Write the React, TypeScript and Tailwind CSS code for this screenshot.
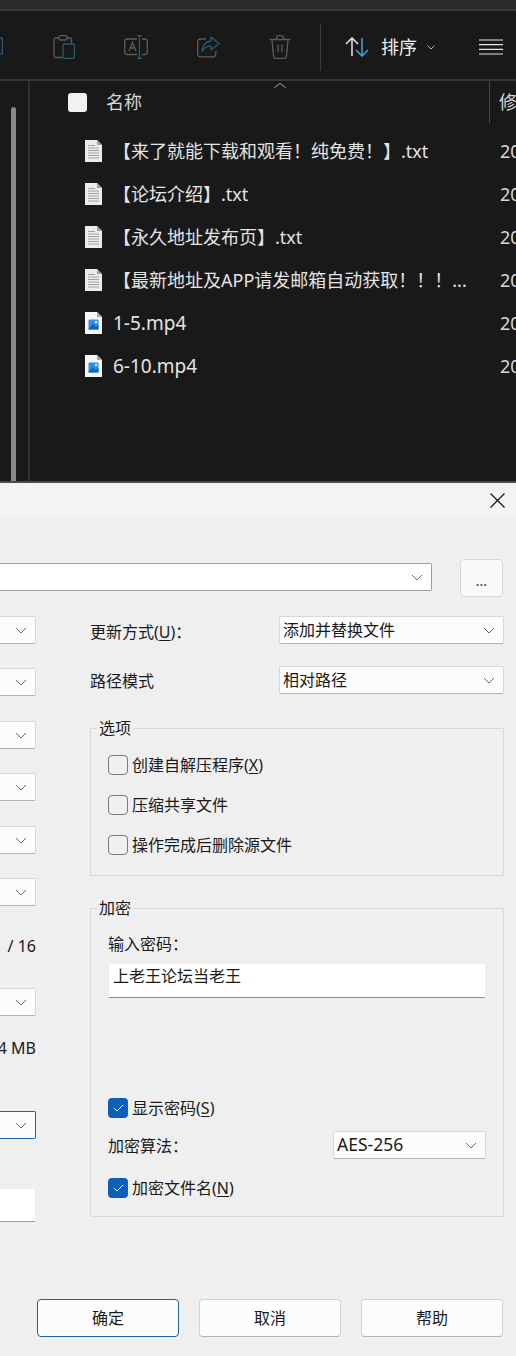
const FONT = "font-['Noto_Sans','Noto_Sans_CJK_SC',sans-serif]";

const FILES = [
  { name: "【来了就能下载和观看！纯免费！】.txt", video: false },
  { name: "【论坛介绍】.txt", video: false },
  { name: "【永久地址发布页】.txt", video: false },
  { name: "【最新地址及APP请发邮箱自动获取！！！...", video: false },
  { name: "1-5.mp4", video: true },
  { name: "6-10.mp4", video: true },
];

function TextFileIcon() {
  return (
    <svg width="17" height="22" viewBox="0 0 17 22" className="shrink-0">
      <path d="M0 0H12L17 5V22H0Z" fill="#ececec" />
      <path d="M12 0L17 5H12Z" fill="#a0a0a0" />
      <path d="M3 5.500H10M3 8H14M3 10.500H14M3 13H14M3 15.500H14M3 18H14" stroke="#a2a2a2" strokeWidth="1" />
    </svg>
  );
}

function VideoFileIcon() {
  return (
    <svg width="17" height="22" viewBox="0 0 17 22" className="shrink-0">
      <path d="M0 0H12L17 5V22H0Z" fill="#f6f6f6" />
      <path d="M12 0L17 5H12Z" fill="#a8a8a8" />
      <rect x="3.500" y="7.500" width="10" height="10" rx="1" fill="#2f8fe8" />
      <path d="M3.500 16.500L8 12L11 15L13.500 13V17.500H3.500Z" fill="#1462c0" />
      <circle cx="11" cy="10" r="1.200" fill="#dff0ff" />
    </svg>
  );
}

function Toolbar() {
  return (
    <div className="flex h-[68px] items-center bg-[#191919] pt-[4px]">
      <svg width="3" height="20" viewBox="0 0 3 20" fill="none" className="shrink-0">
        <path d="M0 1H0.500Q2.500 1 2.500 3V15Q2.500 17 0.500 17H0" stroke="#2b5570" strokeWidth="1.500" />
      </svg>
      <svg width="22" height="24" viewBox="0 0 22 24" fill="none" className="ml-[50px] shrink-0">
        <path d="M6 3H2.500A1.500 1.500 0 0 0 1 4.500V21A1.500 1.500 0 0 0 2.500 22.500H9M14 3H17A1.500 1.500 0 0 1 18.500 4.500V8" stroke="#5c5c5c" strokeWidth="1.300" />
        <rect x="6" y="0.700" width="8" height="4.300" rx="1.500" stroke="#5c5c5c" strokeWidth="1.300" />
        <rect x="10" y="9" width="11.300" height="14.300" rx="1.500" stroke="#2b5a78" strokeWidth="1.300" />
      </svg>
      <svg width="24" height="24" viewBox="0 0 24 24" fill="none" className="ml-[49px] shrink-0">
        <path d="M13 4H3A2.500 2.500 0 0 0 0.700 6.500V17A2.500 2.500 0 0 0 3 19.500H13M18 4H21A2.500 2.500 0 0 1 23.300 6.500V17A2.500 2.500 0 0 1 21 19.500H18" stroke="#5c5c5c" strokeWidth="1.300" />
        <path d="M5 16L8.500 7.500L12 16M6.200 13H10.800" stroke="#5c5c5c" strokeWidth="1.300" />
        <path d="M15.500 0.700V23.300M13 0.700H18M13 23.300H18" stroke="#2b5a78" strokeWidth="1.300" />
      </svg>
      <svg width="23" height="22" viewBox="0 0 23 22" fill="none" className="ml-[49px] shrink-0">
        <path d="M9 3H3.500A2.800 2.800 0 0 0 0.700 5.800V18A2.800 2.800 0 0 0 3.500 20.800H16A2.800 2.800 0 0 0 18.800 18V15" stroke="#5c5c5c" strokeWidth="1.300" />
        <path d="M14 1L22 7.500L14 14V10.200C10 10 7 11.500 5 15.500C5.500 9.500 9 5.500 14 5Z" stroke="#2b5a78" strokeWidth="1.300" strokeLinejoin="round" />
      </svg>
      <svg width="22" height="24" viewBox="0 0 22 24" fill="none" className="ml-[49px] shrink-0">
        <path d="M0.500 4.500H21.500M7.500 4.500V2.500A1.800 1.800 0 0 1 9.300 0.700H12.700A1.800 1.800 0 0 1 14.500 2.500V4.500M3 4.500L4.500 21A2.500 2.500 0 0 0 7 23.300H15A2.500 2.500 0 0 0 17.500 21L19 4.500M9 9.500V17.500M13 9.500V17.500" stroke="#5c5c5c" strokeWidth="1.300" />
      </svg>
      <div className="ml-[29px] h-[47px] w-[1px] shrink-0 bg-[#3a3a3a]" />
      <svg width="24" height="20" viewBox="0 0 24 20" fill="none" className="ml-[24px] shrink-0">
        <path d="M7 19V1M1 7L7 1L13 7" stroke="#e8e8e8" strokeWidth="1.500" />
        <path d="M17 1V19M11 13L17 19L23 13" stroke="#4aa3dc" strokeWidth="1.500" />
      </svg>
      <span className="ml-[12px] shrink-0 text-[18px] leading-none text-[#eeeeee]">排序</span>
      <svg width="8" height="5" viewBox="0 0 8 5" fill="none" className="ml-[10px] shrink-0">
        <path d="M0.500 0.500L4 4L7.500 0.500" stroke="#b0b0b0" strokeWidth="1" />
      </svg>
      <svg width="24" height="16" viewBox="0 0 24 16" fill="none" className="ml-[44px] shrink-0">
        <path d="M0 1H24M0 5.700H24M0 10.300H24M0 15H24" stroke="#e8e8e8" strokeWidth="1.200" />
      </svg>
    </div>
  );
}

function FileList() {
  return (
    <div className="relative flex min-h-0 flex-1 bg-[#191919]">
      <div className="w-[28px] shrink-0 pl-[11px] pt-[26px]">
        <div className="h-full w-[5px] rounded-t-[3px] bg-[#8a8a8a]" />
      </div>
      <div className="w-[2px] shrink-0 bg-[#303030]" />
      <div className="min-w-0 flex-1">
        <div className="flex h-[42px] items-center">
          <div className="flex h-full w-[460px] shrink-0 items-center border-r border-[#4a4a4a] pl-[38px]">
            <div className="h-[19px] w-[19px] rounded-[3px] bg-[#f2f2f2]" />
            <span className="ml-[19px] text-[18px] leading-none text-[#d8d8d8]">名称</span>
          </div>
          <span className="ml-[9px] whitespace-nowrap text-[18px] leading-none text-[#d8d8d8]">修</span>
        </div>
        <svg width="12" height="5" viewBox="0 0 12 5" fill="none" className="absolute left-[274px] top-[2px]">
          <path d="M0.500 4.500L6 0.500L11.500 4.500" stroke="#a8a8a8" strokeWidth="1" />
        </svg>
        <div className="pt-[6px]">
          {FILES.map((file) => (
            <div key={file.name} className="flex h-[43px] items-center pl-[55px]">
              {file.video ? <VideoFileIcon /> : <TextFileIcon />}
              <span className={`ml-[11px] w-[377px] shrink-0 whitespace-nowrap leading-none text-[#e4e4e4] ${file.video ? "pt-[2px] text-[19px]" : "text-[18px]"}`}>
                {file.name}
              </span>
              <span className="ml-[10px] whitespace-nowrap text-[18px] leading-none text-[#d8d8d8]">20</span>
            </div>
          ))}
        </div>
      </div>
    </div>
  );
}

function Chevron({ className = "" }: { className?: string }) {
  return (
    <svg width="12" height="7" viewBox="0 0 12 7" fill="none" className={`shrink-0 ${className}`}>
      <path d="M1 1L6 6L11 1" stroke="#6b6b6b" strokeWidth="1" />
    </svg>
  );
}

function Combo({ text, className, textClass = "text-[16px]" }: { text?: string; className: string; textClass?: string }) {
  return (
    <div className={`flex items-center justify-between rounded-[2px] border border-[#d8d8d8] border-b-[#b4b4b4] bg-[#fcfcfc] pl-[3px] pr-[8px] leading-none text-[#1a1a1a] ${textClass} ${className}`}>
      <span className="whitespace-nowrap">{text}</span>
      <Chevron />
    </div>
  );
}

function EdgeCombo({ className }: { className: string }) {
  return (
    <div className={`flex h-[28px] items-center justify-end rounded-r-[2px] border border-l-0 border-[#d8d8d8] border-b-[#b4b4b4] bg-[#fcfcfc] pr-[8px] ${className}`}>
      <Chevron />
    </div>
  );
}

function Check({ label, hotkey, checked, className = "" }: { label: string; hotkey?: string; checked?: boolean; className?: string }) {
  return (
    <div className={`flex h-[19px] items-center text-[16px] leading-none text-[#1a1a1a] ${className}`}>
      {checked ? (
        <div className="flex h-[20px] w-[20px] shrink-0 items-center justify-center rounded-[4px] bg-[#0b5fb8]">
          <svg width="11" height="8" viewBox="0 0 11 8" fill="none">
            <path d="M0.800 4L4 7L10.200 0.800" stroke="#ffffff" strokeWidth="1" />
          </svg>
        </div>
      ) : (
        <div className="h-[20px] w-[20px] shrink-0 rounded-[4px] border border-[#7c7c7c] bg-[#f0f0f0]" />
      )}
      <span className="ml-[4px] whitespace-nowrap">
        {label}
        {hotkey && (
          <>
            (<span className="underline underline-offset-2">{hotkey}</span>)
          </>
        )}
      </span>
    </div>
  );
}

function DialogButton({ text, primary }: { text: string; primary?: boolean }) {
  return (
    <button className={`h-[38px] w-[142px] rounded-[4px] border bg-[#fcfcfc] text-[16px] leading-none text-[#1a1a1a] ${primary ? "border-[#1666a8]" : "border-[#d2d2d2] border-b-[#b4b4b4]"}`}>
      {text}
    </button>
  );
}

function LeftColumn() {
  return (
    <div className="w-[36px] shrink-0 text-[16px] leading-[24px] text-[#1a1a1a]">
      <EdgeCombo className="" />
      <EdgeCombo className="mt-[24px]" />
      <EdgeCombo className="mt-[25px]" />
      <EdgeCombo className="mt-[24px]" />
      <EdgeCombo className="mt-[25px]" />
      <EdgeCombo className="mt-[24px]" />
      <div className="mt-[28px] flex justify-end whitespace-nowrap">/ 16</div>
      <EdgeCombo className="mt-[30px]" />
      <div className="mt-[20px] flex justify-end whitespace-nowrap">4 MB</div>
      <div className="mt-[51px] flex h-[28px] items-center justify-end rounded-r-[2px] border border-l-0 border-[#1666a8] bg-[#fcfcfc] pr-[8px]">
        <Chevron />
      </div>
      <div className="mt-[50px] h-[33px] w-[35px] border-b border-[#9a9a9a] bg-white" />
    </div>
  );
}

function RightColumn() {
  return (
    <div className="ml-[54px] w-[414px] shrink-0 text-[16px] text-[#1a1a1a]">
      <div className="flex items-center justify-between">
        <span className="pt-[3px] leading-none">
          更新方式(<span className="underline underline-offset-2">U</span>)：
        </span>
        <Combo text="添加并替换文件" className="h-[28px] w-[225px]" />
      </div>
      <div className="mt-[22px] flex items-center justify-between">
        <span className="pt-[2px] leading-none">路径模式</span>
        <Combo text="相对路径" className="h-[28px] w-[225px]" />
      </div>

      <fieldset className="mt-[22px] rounded-[1px] border border-[#d8d8d8] px-[17px] pb-[21px]">
        <legend className="-ml-[11px] px-[2px] leading-[24px]">选项</legend>
        <Check label="创建自解压程序" hotkey="X" className="mt-[15px]" />
        <Check label="压缩共享文件" className="mt-[21px]" />
        <Check label="操作完成后删除源文件" className="mt-[21px]" />
      </fieldset>

      <fieldset className="mt-[20px] rounded-[1px] border border-[#d8d8d8] px-[17px] pb-[19px]">
        <legend className="-ml-[11px] px-[2px] leading-[24px]">加密</legend>
        <div className="mt-[12px] leading-[24px]">输入密码：</div>
        <div className="ml-[1px] mr-[1px] mt-[8px] h-[34px] border-b border-[#8c8c8c] bg-white pl-[4px] pt-[4px] leading-none">
          上老王论坛当老王
        </div>
        <Check label="显示密码" hotkey="S" checked className="mt-[100px]" />
        <div className="mt-[14px] flex items-center justify-between">
          <span className="pt-[2px] leading-none">加密算法：</span>
          <Combo text="AES-256" textClass="text-[17.5px]" className="h-[28px] w-[153px]" />
        </div>
        <Check label="加密文件名" hotkey="N" checked className="mt-[19px]" />
      </fieldset>
    </div>
  );
}

export default function App() {
  return (
    <div className={`flex h-[1356px] w-[516px] flex-col overflow-hidden bg-[#191919] ${FONT}`}>
      <div className="flex h-[481px] shrink-0 flex-col">
        <div className="h-[9px] shrink-0 bg-[#2a2a2a]" />
        <div className="h-[2px] shrink-0 bg-[#3c3c3c]" />
        <Toolbar />
        <div className="h-[2px] shrink-0 bg-[#383838]" />
        <FileList />
      </div>

      <div className="flex min-h-0 flex-1 flex-col border-t-2 border-[#4a4a4a] bg-[#efefef]">
        <div className="flex h-[34px] shrink-0 items-center justify-end bg-[#f3f3f3] pr-[11px]">
          <svg width="15" height="15" viewBox="0 0 15 15" fill="none">
            <path d="M0.500 0.500L14.500 14.500M14.500 0.500L0.500 14.500" stroke="#1a1a1a" strokeWidth="1.300" />
          </svg>
        </div>

        <div className="mt-[42px] flex h-[38px] items-center">
          <div className="mb-[2px] flex h-[28px] w-[432px] items-center justify-end rounded-r-[2px] border border-l-0 border-[#9c9c9c] bg-white pr-[8px]">
            <Chevron />
          </div>
          <button className="ml-[28px] h-[38px] w-[43px] rounded-[4px] border border-[#d8d8d8] bg-[#f9f9f9] pt-[6px] text-[14px] leading-none text-[#333333]">
            ...
          </button>
        </div>

        <div className="mt-[19px] flex">
          <LeftColumn />
          <RightColumn />
        </div>

        <div className="mt-[77px] flex gap-[20px] pl-[37px]">
          <DialogButton text="确定" primary />
          <DialogButton text="取消" />
          <DialogButton text="帮助" />
        </div>
      </div>
    </div>
  );
}
